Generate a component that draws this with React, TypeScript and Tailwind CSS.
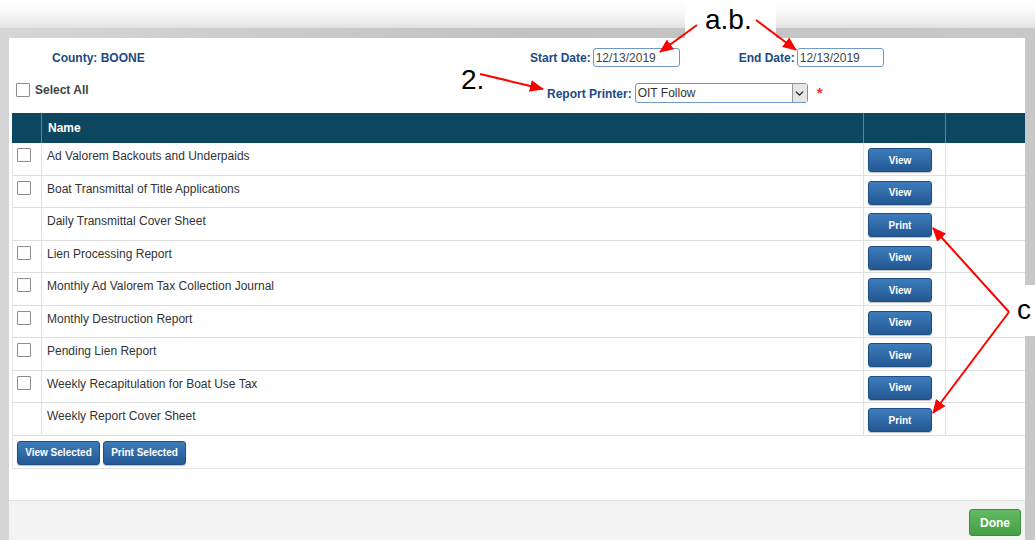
import { ChevronDown } from 'lucide-react'

type Report = {
  name: string
  action: 'View' | 'Print'
}

const reports: Report[] = [
  { name: 'Ad Valorem Backouts and Underpaids', action: 'View' },
  { name: 'Boat Transmittal of Title Applications', action: 'View' },
  { name: 'Daily Transmittal Cover Sheet', action: 'Print' },
  { name: 'Lien Processing Report', action: 'View' },
  { name: 'Monthly Ad Valorem Tax Collection Journal', action: 'View' },
  { name: 'Monthly Destruction Report', action: 'View' },
  { name: 'Pending Lien Report', action: 'View' },
  { name: 'Weekly Recapitulation for Boat Use Tax', action: 'View' },
  { name: 'Weekly Report Cover Sheet', action: 'Print' },
]

function Checkbox() {
  return <span className="block h-[14px] w-[14px] rounded-[1px] border border-[#8d8d8d] bg-white" />
}

function BlueButton({ label, className }: { label: string; className: string }) {
  return (
    <button
      className={`flex items-center justify-center rounded-[3px] border border-[#1d4f86] bg-gradient-to-b from-[#3e7cbc] to-[#235892] text-[10px] font-bold text-white shadow-[0_1px_1px_rgba(0,0,0,0.25)] ${className}`}
    >
      {label}
    </button>
  )
}

function Arrows() {
  const lines = [
    [697, 25, 660, 52],
    [756, 20, 796, 50],
    [480, 74, 543, 89],
    [1009, 312, 933, 228],
    [1009, 312, 933, 413],
  ]
  return (
    <svg className="pointer-events-none absolute inset-0" width={1035} height={540}>
      <defs>
        <marker id="head" markerUnits="userSpaceOnUse" markerWidth="14" markerHeight="12" refX="13" refY="6" orient="auto">
          <path d="M0 0 L14 6 L0 12 Z" fill="#ff0000" />
        </marker>
      </defs>
      {lines.map(([x1, y1, x2, y2], i) => (
        <line key={i} x1={x1} y1={y1} x2={x2} y2={y2} stroke="#ff0000" strokeWidth={2} markerEnd="url(#head)" />
      ))}
    </svg>
  )
}

export default function App() {
  return (
    <div className="relative h-[540px] w-[1035px] overflow-hidden bg-white font-['Liberation_Sans',Arial,sans-serif] text-[12px] text-[#333]">
      <div className="h-[28px] bg-gradient-to-b from-white via-[#f7f7f7] to-[#e2e2e2]" />
      <div className="flex h-[512px] bg-gradient-to-r from-[#d6d6d6] via-[#c2c2c2] to-[#c8c8c8] pl-[9px] pr-[10px] pt-[10px]">
        <div className="flex w-full flex-col bg-white">
          {/* dates */}
          <div className="mt-[10px] flex h-[19px] items-center">
            <div className="w-[521px] pl-[43px] font-bold text-[#1b4a86]">County: BOONE</div>
            <span className="font-bold text-[#1b4a86]">Start Date:</span>
            <div className="ml-[2px] flex h-[19px] w-[87px] items-center rounded-[3px] border border-[#6f98c8] px-[2px] text-[#444]">
              12/13/2019
            </div>
            <span className="ml-[59px] font-bold text-[#1b4a86]">End Date:</span>
            <div className="ml-[2px] flex h-[19px] w-[87px] items-center rounded-[3px] border border-[#6f98c8] px-[2px] text-[#444]">
              12/13/2019
            </div>
          </div>

          {/* select all + printer */}
          <div className="mt-[16px] flex h-[20px] items-center">
            <div className="flex w-[538px] items-center gap-[5px] self-start pl-[7px] leading-[14px]">
              <Checkbox />
              <span className="font-bold text-[#444]">Select All</span>
            </div>
            <span className="pt-[2px] font-bold text-[#1b4a86]">Report Printer:</span>
            <div className="ml-[3px] flex h-[20px] w-[173px] items-center rounded-[3px] border border-[#6f98c8] pl-[2px]">
              <span className="flex-1">OIT Follow</span>
              <span className="flex h-full w-[15px] items-center justify-center border-l border-[#9a9a9a] bg-[#e6e6e6]">
                <ChevronDown size={13} strokeWidth={2.5} className="text-[#222]" />
              </span>
            </div>
            <span className="ml-[9px] text-[15px] font-bold text-[#e53935]">*</span>
          </div>

          {/* report table */}
          <div className="ml-[3px] mt-[10px]">
            <div className="grid h-[30px] grid-cols-[30px_822px_82px_1fr] bg-[#0c465f] font-bold text-white">
              <div className="border-r border-[#5d8294]" />
              <div className="flex items-center border-r border-[#5d8294] pl-[6px]">Name</div>
              <div className="border-r border-[#5d8294]" />
              <div />
            </div>
            {reports.map((r) => (
              <div key={r.name} className="grid h-[32.5px] grid-cols-[30px_822px_82px_1fr] border-b border-[#dedede]">
                <div className="border-l border-r border-[#e3e3e3] pl-[4px] pt-[5px]">
                  {r.action === 'View' && <Checkbox />}
                </div>
                <div className="border-r border-[#e3e3e3] pl-[5px] pt-[4px]">{r.name}</div>
                <div className="border-r border-[#e3e3e3] pl-[4px] pt-[5px]">
                  <BlueButton label={r.action} className="h-[24px] w-[64px]" />
                </div>
                <div />
              </div>
            ))}
            <div className="flex h-[33px] gap-[3px] border-b border-l border-[#e3e3e3] pl-[4px] pt-[5px]">
              <BlueButton label="View Selected" className="h-[24px] w-[83px]" />
              <BlueButton label="Print Selected" className="h-[24px] w-[83px]" />
            </div>
          </div>

          {/* footer */}
          <div className="mt-auto flex h-[40px] justify-end border-t border-[#e2e2e2] bg-[#f3f3f3] pr-[4px] pt-[8px]">
            <button className="h-[27px] w-[52px] rounded-[3px] border border-[#3f8f3f] bg-gradient-to-b from-[#62bb62] to-[#459f45] text-[12px] font-bold text-white">
              Done
            </button>
          </div>
        </div>
      </div>

      {/* callouts */}
      <div className="absolute left-[685px] top-0 h-[40px] w-[91px] bg-white pl-[20px] pt-[3px] text-[28px] leading-[34px] text-black">
        a.b.
      </div>
      <div className="absolute left-[461px] top-[63px] text-[28px] leading-[34px] text-black">2.</div>
      <div className="absolute left-[1010px] top-[285px] h-[51px] w-[25px] bg-white pl-[7px] pt-[8px] text-[28px] leading-[34px] text-black">
        c
      </div>
      <Arrows />
    </div>
  )
}
